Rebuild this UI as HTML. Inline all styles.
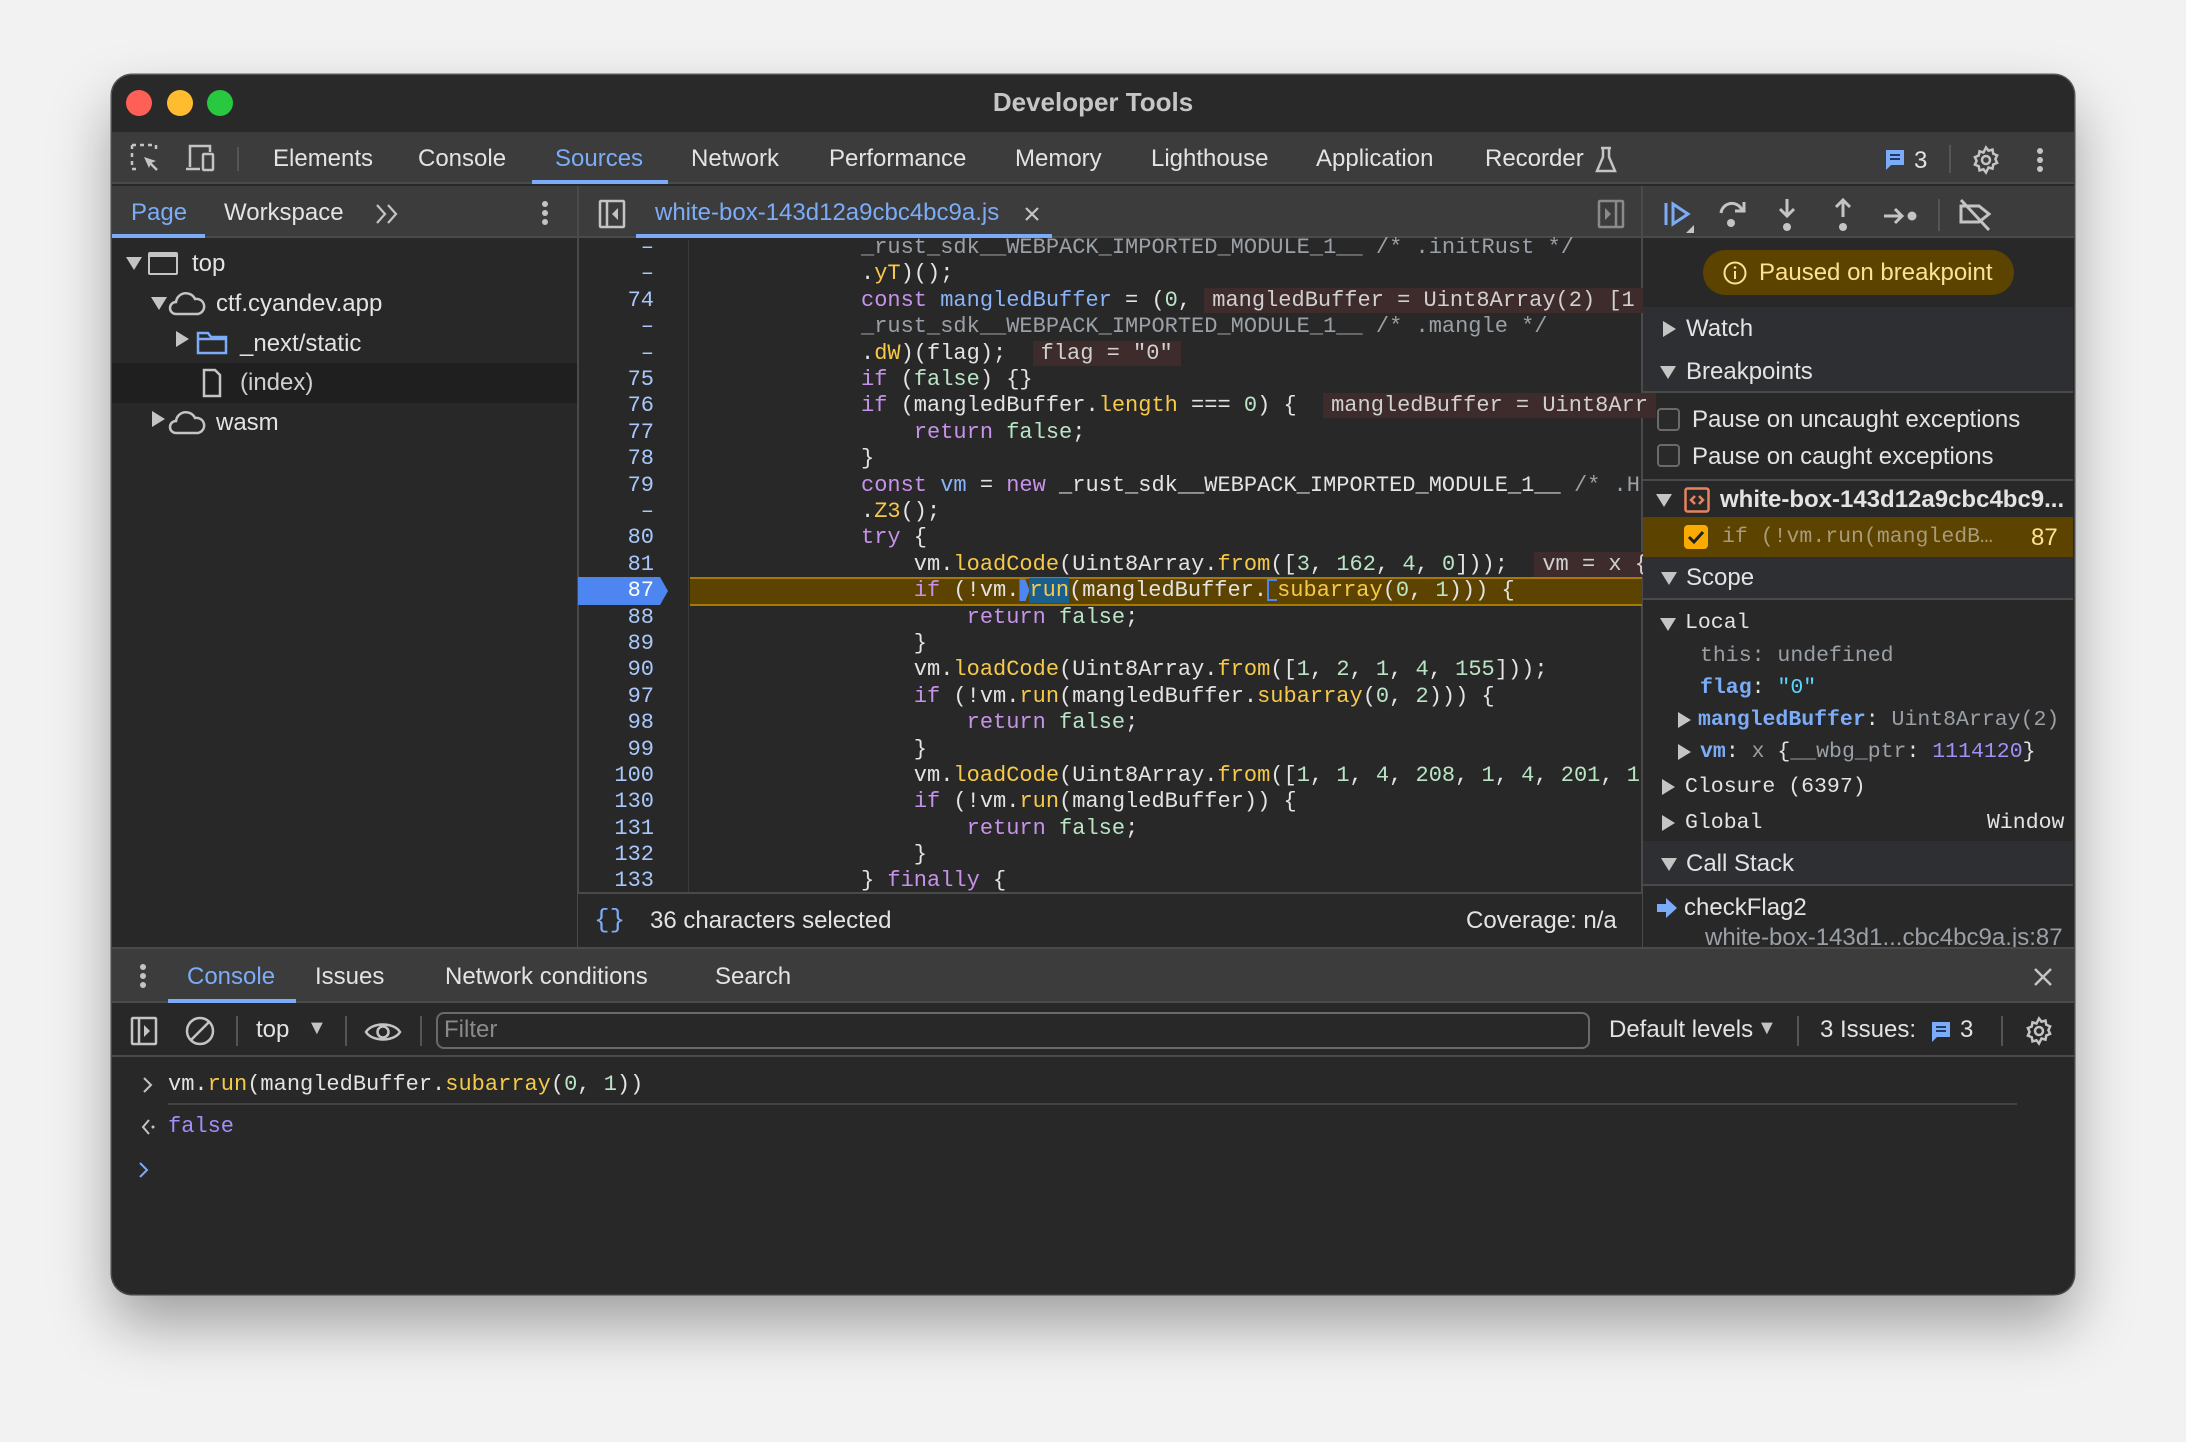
<!DOCTYPE html>
<html><head><meta charset="utf-8"><style>
*{margin:0;padding:0;box-sizing:border-box}
body{width:2186px;height:1442px;background:#f2f2f2;position:relative;overflow:hidden;font-family:"Liberation Sans",Arial,sans-serif;color:#e3e3e3}
.a{position:absolute}
.win{left:112px;top:75px;width:1962px;height:1219px;background:#282828;border-radius:20px;overflow:hidden;box-shadow:0 30px 60px rgba(0,0,0,.35),0 0 0 1.5px #5a5a5a}
.t{position:absolute;font-size:24px;white-space:nowrap;line-height:28px}
.m{position:absolute;font-family:"Liberation Mono",monospace;font-size:22px;white-space:pre;line-height:26px}
.code .m{left:861px}
.k{color:#c792ea}.f{color:#f7c948}.n{color:#b9e5c5}.c{color:#9aa0a6}.b{color:#89b4fa}.d{color:#e3e3e3}
.ln{position:absolute;width:76px;left:578px;text-align:right;font-family:"Liberation Mono",monospace;font-size:22px;line-height:26px;color:#a8c7fa}
.box{background:#3e2c2c;color:#d0d0d0;padding:0 8px}
.sep{position:absolute;width:2px;background:#555}
.tri{position:absolute;width:0;height:0}
.td{border-left:8px solid transparent;border-right:8px solid transparent;border-top:13px solid #c4c4c4}
.tr{border-top:8px solid transparent;border-bottom:8px solid transparent;border-left:13px solid #c4c4c4}
</style></head><body>
<div class="a win">
<div class="a" style="left:0;top:0;width:1962px;height:57px;background:#292929"></div>
<div class="a" style="left:14px;top:15px;width:26px;height:26px;border-radius:50%;background:#fe5f57"></div>
<div class="a" style="left:55px;top:15px;width:26px;height:26px;border-radius:50%;background:#febc2e"></div>
<div class="a" style="left:95px;top:15px;width:26px;height:26px;border-radius:50%;background:#28c840"></div>
<div class="t" style="left:0;width:1962px;text-align:center;top:13px;font-size:26px;font-weight:bold;color:#c6c6c6">Developer Tools</div>
<div class="a" style="left:0;top:57px;width:1962px;height:52px;background:#3c3c3c;border-bottom:2px solid #4a4a4a"></div>
<svg class="a" style="left:18px;top:68px" width="30" height="30" viewBox="0 0 30 30" fill="none" stroke="#c4c4c4" stroke-width="2.5"><path d="M2 2h4M10 2h4M18 2h4M2 2v4M2 10v4M2 18v4M26 2v4M2 26h4"/><path d="M14 14l12 4-5 2-2 5z" fill="#c4c4c4" stroke="none"/><path d="M20 20l7 7"/></svg>
<svg class="a" style="left:72px;top:68px" width="34" height="30" viewBox="0 0 34 30" fill="none" stroke="#c4c4c4" stroke-width="2.5"><path d="M6 24V3h20v6"/><path d="M2 26h14"/><rect x="19" y="11" width="10" height="16" rx="1"/></svg>
<div class="sep" style="left:125px;top:72px;height:24px"></div>
<div class="t" style="left:161px;top:70px;color:#e3e3e3">Elements</div>
<div class="t" style="left:306px;top:70px;color:#e3e3e3">Console</div>
<div class="t" style="left:443px;top:70px;color:#7cacf8">Sources</div>
<div class="a" style="left:420px;top:105px;width:136px;height:4px;background:#7cacf8"></div>
<div class="t" style="left:579px;top:70px;color:#e3e3e3">Network</div>
<div class="t" style="left:717px;top:70px;color:#e3e3e3">Performance</div>
<div class="t" style="left:903px;top:70px;color:#e3e3e3">Memory</div>
<div class="t" style="left:1039px;top:70px;color:#e3e3e3">Lighthouse</div>
<div class="t" style="left:1204px;top:70px;color:#e3e3e3">Application</div>
<div class="t" style="left:1373px;top:70px;color:#e3e3e3">Recorder</div>
<svg class="a" style="left:1483px;top:71px" width="22" height="28" viewBox="0 0 22 28" fill="none" stroke="#c4c4c4" stroke-width="2.5"><path d="M6 2h10M8 2v9L2 25h18L14 11V2"/></svg>
<svg class="a" style="left:1772px;top:73px" width="22" height="24" viewBox="0 0 22 24"><path d="M2 2h18v15H7l-5 5z" fill="#7cacf8"/><path d="M6 7h10M6 11h10" stroke="#1f3a66" stroke-width="2"/></svg>
<div class="t" style="left:1802px;top:72px">3</div>
<div class="sep" style="left:1837px;top:70px;height:28px"></div>
<svg class="a" style="left:1859px;top:70px" width="30" height="30" viewBox="0 0 24 24" fill="none" stroke="#c4c4c4" stroke-width="2"><circle cx="12" cy="12" r="3.2"/><path d="M12 2l2 2.6 3.2-.9.6 3.3 3.1 1.3-1.4 3 1.4 3-3.1 1.3-.6 3.3-3.2-.9L12 22l-2-2.6-3.2.9-.6-3.3-3.1-1.3 1.4-3-1.4-3 3.1-1.3.6-3.3 3.2.9z"/></svg>
<svg class="a" style="left:1924px;top:72px" width="8" height="26"><circle cx="4" cy="4" r="3" fill="#c4c4c4"/><circle cx="4" cy="13" r="3" fill="#c4c4c4"/><circle cx="4" cy="22" r="3" fill="#c4c4c4"/></svg>
<div class="a" style="left:0;top:111px;width:1962px;height:52px;background:#3c3c3c;border-bottom:2px solid #4a4a4a"></div>
<div class="t" style="left:19px;top:124px;color:#7cacf8">Page</div>
<div class="a" style="left:0;top:159px;width:93px;height:4px;background:#7cacf8"></div>
<div class="t" style="left:112px;top:124px;color:#e3e3e3">Workspace</div>
<svg class="a" style="left:262px;top:128px" width="26" height="22" viewBox="0 0 26 22" fill="none" stroke="#c4c4c4" stroke-width="2.2"><path d="M3 2l8 9-8 9M14 2l8 9-8 9"/></svg>
<svg class="a" style="left:429px;top:125px" width="8" height="26"><circle cx="4" cy="4" r="3" fill="#c4c4c4"/><circle cx="4" cy="13" r="3" fill="#c4c4c4"/><circle cx="4" cy="22" r="3" fill="#c4c4c4"/></svg>
<div class="a" style="left:465px;top:111px;width:2px;height:762px;background:#4a4a4a"></div>
<svg class="a" style="left:486px;top:124px" width="28" height="30" viewBox="0 0 28 30" fill="none" stroke="#c4c4c4" stroke-width="2.5"><rect x="2" y="2" width="24" height="26" rx="1"/><path d="M9 2v26"/><path d="M20 9l-6 6 6 6" fill="#c4c4c4" stroke="none"/></svg>
<div class="t" style="left:543px;top:124px;color:#7cacf8">white-box-143d12a9cbc4bc9a.js</div>
<svg class="a" style="left:912px;top:131px" width="16" height="16" viewBox="0 0 16 16" stroke="#c4c4c4" stroke-width="2.2"><path d="M2 2l12 12M14 2L2 14"/></svg>
<div class="a" style="left:524px;top:159px;width:416px;height:4px;background:#7cacf8"></div>
<svg class="a" style="left:1485px;top:124px" width="28" height="30" viewBox="0 0 28 30" fill="none" stroke="#8a8a8a" stroke-width="2.5"><rect x="2" y="2" width="24" height="26" rx="1"/><path d="M19 2v26"/><path d="M8 9l6 6-6 6" fill="#8a8a8a" stroke="none"/></svg>
<div class="a" style="left:1529px;top:111px;width:2px;height:762px;background:#4a4a4a"></div>
<svg class="a" style="left:1550px;top:124px" width="34" height="34" viewBox="0 0 34 34"><path d="M4 4v22" stroke="#7cacf8" stroke-width="3"/><path d="M11 5l15 10-15 10z" fill="none" stroke="#7cacf8" stroke-width="3"/><path d="M32 26v8h-8z" fill="#c4c4c4"/></svg>
<svg class="a" style="left:1606px;top:124px" width="30" height="34" viewBox="0 0 30 34" fill="none" stroke="#c4c4c4" stroke-width="3"><path d="M3 14a11 11 0 0 1 21-3"/><path d="M26 3v9h-9"/><circle cx="13" cy="24" r="4" fill="#c4c4c4" stroke="none"/></svg>
<svg class="a" style="left:1663px;top:122px" width="24" height="36" viewBox="0 0 24 36" fill="none" stroke="#c4c4c4" stroke-width="3"><path d="M12 2v16M5 12l7 7 7-7"/><circle cx="12" cy="30" r="4" fill="#c4c4c4" stroke="none"/></svg>
<svg class="a" style="left:1719px;top:122px" width="24" height="36" viewBox="0 0 24 36" fill="none" stroke="#c4c4c4" stroke-width="3"><path d="M12 20V3M5 10l7-7 7 7"/><circle cx="12" cy="30" r="4" fill="#c4c4c4" stroke="none"/></svg>
<svg class="a" style="left:1770px;top:130px" width="36" height="22" viewBox="0 0 36 22" fill="none" stroke="#c4c4c4" stroke-width="3"><path d="M2 11h18M13 4l7 7-7 7"/><circle cx="30" cy="11" r="4.5" fill="#c4c4c4" stroke="none"/></svg>
<div class="sep" style="left:1826px;top:124px;height:32px"></div>
<svg class="a" style="left:1845px;top:123px" width="36" height="34" viewBox="0 0 36 34" fill="none" stroke="#c4c4c4" stroke-width="3"><path d="M4 8h18l10 8-10 8H4z"/><path d="M4 2l28 30"/></svg>

<div class="a" style="left:0;top:165px;width:465px;height:708px;background:#282828"></div>
<div class="a" style="left:0;top:288px;width:465px;height:40px;background:#1f1f1f"></div>
<div class="tri td" style="left:14px;top:182px"></div>
<div class="a" style="left:36px;top:177px;width:30px;height:23px;border:2.5px solid #c4c4c4;border-top-width:5px;border-radius:2px"></div>
<div class="t" style="left:80px;top:175px">top</div>
<div class="tri td" style="left:39px;top:222px"></div>
<svg class="a" style="left:56px;top:215px" width="38" height="26" viewBox="0 0 38 26" fill="none" stroke="#c4c4c4" stroke-width="2.5"><path d="M8 24a6 6 0 0 1 0-12 10 10 0 0 1 19-3 7.5 7.5 0 0 1 3 15z"/></svg>
<div class="t" style="left:104px;top:215px">ctf.cyandev.app</div>
<div class="tri tr" style="left:64px;top:256px"></div>
<svg class="a" style="left:84px;top:254px" width="32" height="26" viewBox="0 0 32 26" fill="none" stroke="#7cacf8" stroke-width="2.5"><path d="M2 4h10l3 4h15v16H2z"/><path d="M2 10h28"/></svg>
<div class="t" style="left:128px;top:255px">_next/static</div>
<svg class="a" style="left:90px;top:293px" width="20" height="30" viewBox="0 0 20 30" fill="none" stroke="#c4c4c4" stroke-width="2.5"><path d="M2 2h11l5 5v21H2z"/></svg>
<div class="t" style="left:128px;top:294px;color:#d0d0d0">(index)</div>
<div class="tri tr" style="left:40px;top:336px"></div>
<svg class="a" style="left:56px;top:334px" width="38" height="26" viewBox="0 0 38 26" fill="none" stroke="#c4c4c4" stroke-width="2.5"><path d="M8 24a6 6 0 0 1 0-12 10 10 0 0 1 19-3 7.5 7.5 0 0 1 3 15z"/></svg>
<div class="t" style="left:104px;top:334px">wasm</div>
<div class="a" style="left:576px;top:165px;width:1px;height:654px;background:#3a3a3a"></div>
</div>

<div class="code">
<div class="a" style="left:578px;top:577px;width:90px;height:28px;background:#4d86f0;clip-path:polygon(0 0,82px 0,90px 50%,82px 100%,0 100%)"></div>
<div class="a" style="left:690px;top:577px;width:952px;height:29px;background:#5c4300;border-top:2px solid #a67900;border-bottom:2px solid #a67900"></div>
<div class="ln" style="top:235px">–</div><div class="m c" style="top:235px">_rust_sdk__WEBPACK_IMPORTED_MODULE_1__ /* .initRust */</div>
<div class="ln" style="top:261px">–</div><div class="m" style="top:261px">.<span class="f">yT</span>)();</div>
<div class="ln" style="top:288px">74</div><div class="m" style="top:288px"><span class="k">const</span> <span class="b">mangledBuffer</span> = (<span class="n">0</span>, <span class="box">mangledBuffer = Uint8Array(2) [1</span></div>
<div class="ln" style="top:314px">–</div><div class="m c" style="top:314px">_rust_sdk__WEBPACK_IMPORTED_MODULE_1__ /* .mangle */</div>
<div class="ln" style="top:341px">–</div><div class="m" style="top:341px">.<span class="f">dW</span>)(flag);  <span class="box">flag = "0"</span></div>
<div class="ln" style="top:367px">75</div><div class="m" style="top:367px"><span class="k">if</span> (<span class="n">false</span>) {}</div>
<div class="ln" style="top:393px">76</div><div class="m" style="top:393px"><span class="k">if</span> (mangledBuffer.<span class="f">length</span> === <span class="n">0</span>) {  <span class="box">mangledBuffer = Uint8Arr</span></div>
<div class="ln" style="top:420px">77</div><div class="m" style="top:420px">    <span class="k">return</span> <span class="n">false</span>;</div>
<div class="ln" style="top:446px">78</div><div class="m" style="top:446px">}</div>
<div class="ln" style="top:473px">79</div><div class="m" style="top:473px"><span class="k">const</span> <span class="b">vm</span> = <span class="k">new</span> _rust_sdk__WEBPACK_IMPORTED_MODULE_1__ <span class="c">/* .H</span></div>
<div class="ln" style="top:499px">–</div><div class="m" style="top:499px">.<span class="f">Z3</span>();</div>
<div class="ln" style="top:525px">80</div><div class="m" style="top:525px"><span class="k">try</span> {</div>
<div class="ln" style="top:552px">81</div><div class="m" style="top:552px">    vm.<span class="f">loadCode</span>(Uint8Array.<span class="f">from</span>([<span class="n">3</span>, <span class="n">162</span>, <span class="n">4</span>, <span class="n">0</span>]));  <span class="box">vm = x {</span></div>
<div class="ln" style="top:578px;color:#fff">87</div><div class="m" style="top:578px">    <span class="k">if</span> (!vm.<span style="display:inline-block;width:10px;height:22px;background:#4d86f0;clip-path:polygon(0 0,6px 0,10px 50%,6px 100%,0 100%);vertical-align:middle"></span><span style="background:#1b5f8c" class="f">run</span>(mangledBuffer.<span style="display:inline-block;width:10px;height:22px;border:2px solid #4d86f0;border-right:none;vertical-align:middle"></span><span class="f">subarray</span>(<span class="n">0</span>, <span class="n">1</span>))) {</div>
<div class="ln" style="top:605px">88</div><div class="m" style="top:605px">        <span class="k">return</span> <span class="n">false</span>;</div>
<div class="ln" style="top:631px">89</div><div class="m" style="top:631px">    }</div>
<div class="ln" style="top:657px">90</div><div class="m" style="top:657px">    vm.<span class="f">loadCode</span>(Uint8Array.<span class="f">from</span>([<span class="n">1</span>, <span class="n">2</span>, <span class="n">1</span>, <span class="n">4</span>, <span class="n">155</span>]));</div>
<div class="ln" style="top:684px">97</div><div class="m" style="top:684px">    <span class="k">if</span> (!vm.<span class="f">run</span>(mangledBuffer.<span class="f">subarray</span>(<span class="n">0</span>, <span class="n">2</span>))) {</div>
<div class="ln" style="top:710px">98</div><div class="m" style="top:710px">        <span class="k">return</span> <span class="n">false</span>;</div>
<div class="ln" style="top:737px">99</div><div class="m" style="top:737px">    }</div>
<div class="ln" style="top:763px">100</div><div class="m" style="top:763px">    vm.<span class="f">loadCode</span>(Uint8Array.<span class="f">from</span>([<span class="n">1</span>, <span class="n">1</span>, <span class="n">4</span>, <span class="n">208</span>, <span class="n">1</span>, <span class="n">4</span>, <span class="n">201</span>, <span class="n">1</span></div>
<div class="ln" style="top:789px">130</div><div class="m" style="top:789px">    <span class="k">if</span> (!vm.<span class="f">run</span>(mangledBuffer)) {</div>
<div class="ln" style="top:816px">131</div><div class="m" style="top:816px">        <span class="k">return</span> <span class="n">false</span>;</div>
<div class="ln" style="top:842px">132</div><div class="m" style="top:842px">    }</div>
<div class="ln" style="top:868px">133</div><div class="m" style="top:868px">} <span class="k">finally</span> {</div>
</div>

<div class="a" style="left:578px;top:892px;width:1064px;height:56px;background:#282828;border-top:2px solid #4a4a4a"></div>
<div class="t" style="left:594px;top:906px;color:#7cacf8;font-size:26px;font-family:'Liberation Mono',monospace">{}</div>
<div class="t" style="left:650px;top:907px">36 characters selected</div>
<div class="t" style="left:1466px;top:907px">Coverage: n/a</div>

<div class="a" style="left:1643px;top:238px;width:430px;height:70px;background:#282828"></div>
<div class="a" style="left:1703px;top:250px;width:311px;height:45px;border-radius:23px;background:#5c4300"></div>
<svg class="a" style="left:1723px;top:261px" width="24" height="24" viewBox="0 0 24 24" fill="none" stroke="#fde293" stroke-width="2"><circle cx="12" cy="12" r="10.5"/><path d="M12 10v8"/><circle cx="12" cy="6.5" r="1.3" fill="#fde293" stroke="none"/></svg>
<div class="t" style="left:1759px;top:259px;color:#fde293">Paused on breakpoint</div>
<div class="a" style="left:1643px;top:307px;width:430px;height:86px;background:#2e2f32;border-bottom:2px solid #4a4a4a"></div>
<div class="tri tr" style="left:1663px;top:321px"></div>
<div class="t" style="left:1686px;top:315px">Watch</div>
<div class="tri td" style="left:1660px;top:366px"></div>
<div class="t" style="left:1686px;top:358px">Breakpoints</div>
<div class="a" style="left:1657px;top:408px;width:23px;height:23px;border:2.5px solid #6a6a6a;border-radius:4px;background:#2a2a2a"></div>
<div class="t" style="left:1692px;top:406px">Pause on uncaught exceptions</div>
<div class="a" style="left:1657px;top:444px;width:23px;height:23px;border:2.5px solid #6a6a6a;border-radius:4px;background:#2a2a2a"></div>
<div class="t" style="left:1692px;top:443px">Pause on caught exceptions</div>
<div class="a" style="left:1643px;top:479px;width:430px;height:2px;background:#4a4a4a"></div>
<div class="tri td" style="left:1656px;top:494px"></div>
<svg class="a" style="left:1684px;top:487px" width="26" height="26" viewBox="0 0 26 26" fill="none" stroke="#e8835e" stroke-width="2.5"><rect x="1.5" y="1.5" width="23" height="23" rx="2"/><path d="M11 9l-4 4 4 4M15 9l4 4-4 4"/></svg>
<div class="t" style="left:1720px;top:486px;font-weight:bold">white-box-143d12a9cbc4bc9...</div>
<div class="a" style="left:1643px;top:517px;width:430px;height:40px;background:#5c4300"></div>
<div class="a" style="left:1684px;top:525px;width:24px;height:24px;border-radius:4px;background:#f9ab00"></div>
<svg class="a" style="left:1686px;top:528px" width="20" height="18" viewBox="0 0 20 18" fill="none" stroke="#1f1f1f" stroke-width="3"><path d="M3 9l5 5 9-10"/></svg>
<div class="m" style="left:1722px;top:524px;color:#a89a7a;font-size:21.5px">if (!vm.run(mangledB…</div>
<div class="t" style="left:2031px;top:524px;color:#fde293">87</div>
<div class="a" style="left:1643px;top:557px;width:430px;height:43px;background:#2e2f32;border-bottom:2px solid #4a4a4a"></div>
<div class="tri td" style="left:1661px;top:572px"></div>
<div class="t" style="left:1686px;top:564px">Scope</div>
<div class="tri td" style="left:1660px;top:618px"></div>
<div class="m" style="left:1685px;top:610px;font-size:21.5px">Local</div>
<div class="m" style="left:1700px;top:643px;font-size:21.5px;color:#9aa0a6">this: undefined</div>
<div class="m" style="left:1700px;top:675px;font-size:21.5px"><b style="color:#7cacf8">flag</b>: <span style="color:#5cd5fb">"0"</span></div>
<div class="tri tr" style="left:1678px;top:712px"></div>
<div class="m" style="left:1698px;top:707px;font-size:21.5px"><b style="color:#7cacf8">mangledBuffer</b>: <span style="color:#9aa0a6">Uint8Array(2)</span></div>
<div class="tri tr" style="left:1678px;top:744px"></div>
<div class="m" style="left:1700px;top:739px;font-size:21.5px"><b style="color:#7cacf8">vm</b>: <span style="color:#9aa0a6">x</span> {<span style="color:#9aa0a6">__wbg_ptr</span>: <span style="color:#a48ef8">1114120</span>}</div>
<div class="tri tr" style="left:1662px;top:779px"></div>
<div class="m" style="left:1685px;top:774px;font-size:21.5px">Closure (6397)</div>
<div class="tri tr" style="left:1662px;top:815px"></div>
<div class="m" style="left:1685px;top:810px;font-size:21.5px">Global</div>
<div class="m" style="left:1987px;top:810px;font-size:21.5px">Window</div>
<div class="a" style="left:1643px;top:841px;width:430px;height:45px;background:#2e2f32;border-bottom:2px solid #4a4a4a"></div>
<div class="tri td" style="left:1661px;top:858px"></div>
<div class="t" style="left:1686px;top:850px">Call Stack</div>
<svg class="a" style="left:1657px;top:898px" width="20" height="20" viewBox="0 0 20 20"><path d="M0 6h9V0l11 10-11 10v-6H0z" fill="#7cacf8"/></svg>
<div class="t" style="left:1684px;top:894px">checkFlag2</div>
<div class="t" style="left:1705px;top:924px;color:#9aa0a6">white-box-143d1...cbc4bc9a.js:87</div>

<div class="a" style="left:112px;top:947px;width:1962px;height:2px;background:#4a4a4a"></div>
<div class="a" style="left:112px;top:949px;width:1962px;height:54px;background:#3c3c3c;border-bottom:2px solid #4a4a4a"></div>
<svg class="a" style="left:139px;top:963px" width="8" height="26"><circle cx="4" cy="4" r="3" fill="#c4c4c4"/><circle cx="4" cy="13" r="3" fill="#c4c4c4"/><circle cx="4" cy="22" r="3" fill="#c4c4c4"/></svg>
<div class="t" style="left:187px;top:963px;color:#7cacf8">Console</div>
<div class="a" style="left:168px;top:999px;width:128px;height:4px;background:#7cacf8"></div>
<div class="t" style="left:315px;top:963px">Issues</div>
<div class="t" style="left:445px;top:963px">Network conditions</div>
<div class="t" style="left:715px;top:963px">Search</div>
<svg class="a" style="left:2033px;top:967px" width="20" height="20" viewBox="0 0 20 20" stroke="#c4c4c4" stroke-width="2.5"><path d="M2 2l16 16M18 2L2 18"/></svg>
<div class="a" style="left:112px;top:1003px;width:1962px;height:54px;background:#282828;border-bottom:2px solid #4a4a4a"></div>
<svg class="a" style="left:130px;top:1016px" width="28" height="30" viewBox="0 0 28 30" fill="none" stroke="#c4c4c4" stroke-width="2.5"><rect x="2" y="2" width="24" height="26" rx="1"/><path d="M9 2v26"/><path d="M14 9l6 6-6 6" fill="#c4c4c4" stroke="none"/></svg>
<svg class="a" style="left:184px;top:1015px" width="32" height="32" viewBox="0 0 32 32" fill="none" stroke="#c4c4c4" stroke-width="2.5"><circle cx="16" cy="16" r="13"/><path d="M7 25L25 7"/></svg>
<div class="sep" style="left:236px;top:1016px;height:30px"></div>
<div class="t" style="left:256px;top:1016px">top</div>
<div class="t" style="left:307px;top:1014px;color:#c4c4c4;font-size:20px">▼</div>
<div class="sep" style="left:345px;top:1016px;height:30px"></div>
<svg class="a" style="left:364px;top:1019px" width="38" height="26" viewBox="0 0 38 26" fill="none" stroke="#c4c4c4" stroke-width="2.5"><path d="M2 13C8 3 30 3 36 13 30 23 8 23 2 13z"/><circle cx="19" cy="13" r="5.5"/></svg>
<div class="sep" style="left:420px;top:1016px;height:30px"></div>
<div class="a" style="left:436px;top:1012px;width:1154px;height:37px;border:2px solid #6a6a6a;border-radius:8px"></div>
<div class="t" style="left:444px;top:1016px;color:#8a8a8a">Filter</div>
<div class="t" style="left:1609px;top:1016px">Default levels</div>
<div class="t" style="left:1757px;top:1014px;color:#c4c4c4;font-size:20px">▼</div>
<div class="sep" style="left:1797px;top:1016px;height:30px"></div>
<div class="t" style="left:1820px;top:1016px">3 Issues:</div>
<svg class="a" style="left:1930px;top:1020px" width="22" height="24" viewBox="0 0 22 24"><path d="M2 2h18v15H7l-5 5z" fill="#7cacf8"/><path d="M6 7h10M6 11h10" stroke="#1f3a66" stroke-width="2"/></svg>
<div class="t" style="left:1960px;top:1016px">3</div>
<div class="sep" style="left:2001px;top:1016px;height:30px"></div>
<svg class="a" style="left:2024px;top:1016px" width="30" height="30" viewBox="0 0 24 24" fill="none" stroke="#c4c4c4" stroke-width="2"><circle cx="12" cy="12" r="3.2"/><path d="M12 2l2 2.6 3.2-.9.6 3.3 3.1 1.3-1.4 3 1.4 3-3.1 1.3-.6 3.3-3.2-.9L12 22l-2-2.6-3.2.9-.6-3.3-3.1-1.3 1.4-3-1.4-3 3.1-1.3.6-3.3 3.2.9z"/></svg>
<svg class="a" style="left:142px;top:1076px" width="12" height="18" viewBox="0 0 12 18" fill="none" stroke="#c4c4c4" stroke-width="2"><path d="M2 2l7 7-7 7"/></svg>
<div class="m" style="left:168px;top:1072px"><span class="d">vm.</span><span class="f">run</span>(mangledBuffer.<span class="f">subarray</span>(<span class="n">0</span>, <span class="n">1</span>))</div>
<div class="a" style="left:168px;top:1103px;width:1849px;height:2px;background:#444"></div>
<svg class="a" style="left:141px;top:1118px" width="16" height="18" viewBox="0 0 16 18" fill="none" stroke="#c4c4c4" stroke-width="2"><path d="M8 2L2 9l6 7"/><circle cx="12" cy="9" r="1.5" fill="#c4c4c4" stroke="none"/></svg>
<div class="m" style="left:168px;top:1114px;color:#a48ef8">false</div>
<svg class="a" style="left:138px;top:1161px" width="12" height="18" viewBox="0 0 12 18" fill="none" stroke="#7cacf8" stroke-width="2"><path d="M2 2l7 7-7 7"/></svg>
</body></html>
